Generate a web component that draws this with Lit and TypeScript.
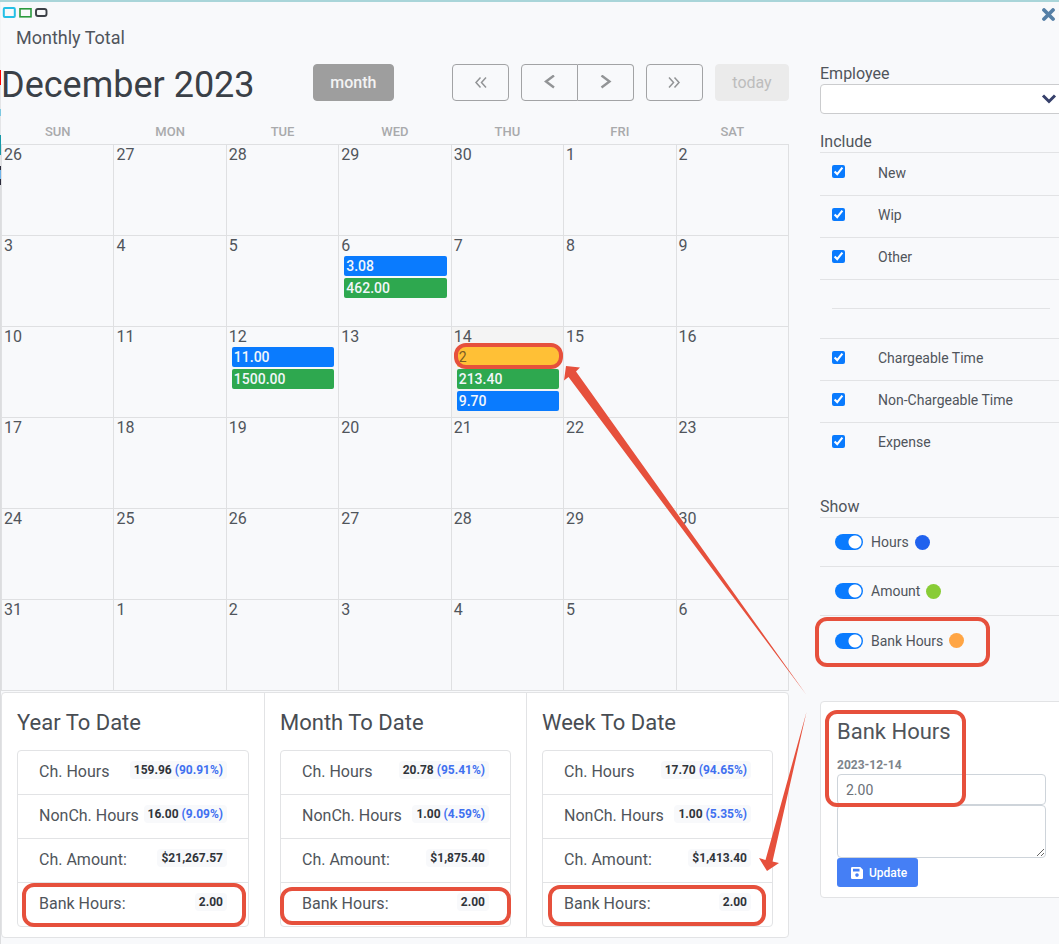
import { LitElement, html, svg, css } from "lit";
import { customElement } from "lit/decorators.js";
import { classMap } from "lit/directives/class-map.js";

type CalendarEvent = { text: string; kind: "hours" | "amount" | "bank"; marked?: boolean };
type Day = { label: string; today?: boolean; events?: CalendarEvent[] };

const WEEKDAYS = ["SUN", "MON", "TUE", "WED", "THU", "FRI", "SAT"];

const EVENTS: Record<number, CalendarEvent[]> = {
  6: [
    { text: "3.08", kind: "hours" },
    { text: "462.00", kind: "amount" },
  ],
  12: [
    { text: "11.00", kind: "hours" },
    { text: "1500.00", kind: "amount" },
  ],
  14: [
    { text: "2", kind: "bank", marked: true },
    { text: "213.40", kind: "amount" },
    { text: "9.70", kind: "hours" },
  ],
};

/* Six weeks, starting on Sunday 26 November 2023. */
const WEEKS: Day[][] = Array.from({ length: 6 }, (_, week) =>
  Array.from({ length: 7 }, (_, weekday) => {
    const offset = week * 7 + weekday - 4;
    if (offset <= 0) return { label: String(30 + offset) };
    if (offset > 31) return { label: String(offset - 31) };
    return { label: String(offset), today: offset === 14, events: EVENTS[offset] };
  })
);

const TOTALS = [
  {
    id: "year",
    title: "Year To Date",
    rows: [
      ["Ch. Hours", "159.96", "(90.91%)"],
      ["NonCh. Hours", "16.00", "(9.09%)"],
      ["Ch. Amount:", "$21,267.57", ""],
      ["Bank Hours:", "2.00", ""],
    ],
  },
  {
    id: "month",
    title: "Month To Date",
    rows: [
      ["Ch. Hours", "20.78", "(95.41%)"],
      ["NonCh. Hours", "1.00", "(4.59%)"],
      ["Ch. Amount:", "$1,875.40", ""],
      ["Bank Hours:", "2.00", ""],
    ],
  },
  {
    id: "week",
    title: "Week To Date",
    rows: [
      ["Ch. Hours", "17.70", "(94.65%)"],
      ["NonCh. Hours", "1.00", "(5.35%)"],
      ["Ch. Amount:", "$1,413.40", ""],
      ["Bank Hours:", "2.00", ""],
    ],
  },
];

const STATUS = ["New", "Wip", "Other"];
const KINDS = ["Chargeable Time", "Non-Chargeable Time", "Expense"];
const SHOW = [
  { label: "Hours", dot: "blue" },
  { label: "Amount", dot: "green" },
  { label: "Bank Hours", dot: "orange", marked: true },
];

const CHEVRONS = {
  first: svg`<path d="M7.500 2.500 3 7.500l4.500 5M13 2.500 8.500 7.500l4.500 5" stroke-width="1.500"/>`,
  last: svg`<path d="M2 2.500 6.500 7.500l-4.500 5M7.500 2.500 12 7.500l-4.500 5" stroke-width="1.500"/>`,
  prev: svg`<path d="M12 .500 4 6.500l8 6" stroke-width="2.400"/>`,
  next: svg`<path d="M3.500 .500l8 6-8 6" stroke-width="2.400"/>`,
};

@customElement("app-root")
export class AppRoot extends LitElement {
  static styles = css`
    :host {
      display: block;
      font-family: Roboto, "Liberation Sans", sans-serif;
      font-size: 16px;
      line-height: 20px;
      color: #50555b;
    }
    *, *::before, *::after { box-sizing: border-box; }
    h1, h2, p, ul { margin: 0; padding: 0; font-weight: 400; }
    button, input, textarea, select { font-family: inherit; margin: 0; }

    .page {
      position: relative;
      min-height: 100vh;
      overflow: hidden;
      padding-left: 1px;
      background: #f8f9fb;
      border-top: 2px solid #a9d5d9;
    }
    .edge {
      position: absolute;
      left: 0;
      top: 0;
      bottom: 0;
      width: 1px;
      background: linear-gradient(
        #f3f4f5 0 68px, #f00 68px 83px, #e4e5e7 83px 107px, #7cc8e0 107px 114px,
        #e4e5e7 114px 133px, #1799a8 133px 153px, #e4e5e7 153px 164px, #2b2b3a 164px 168px,
        #6fb4ea 168px 177px, #2b2b3a 177px 183px, #dcdddf 183px 100%
      );
    }
    .topbar { display: flex; align-items: flex-start; padding: 5px 3px 0 1px; height: 22px; }
    .marks { display: flex; gap: 3px; flex: 1; }
    .marks svg { display: block; }
    .close { border: 0; padding: 0; background: none; height: 15px; }
    .close svg { display: block; }
    .caption { padding: 5px 15px 0; font-size: 18px; line-height: 18px; }

    .layout { display: grid; grid-template-columns: minmax(0, 1fr) 239px; gap: 31px; }

    .toolbar {
      display: flex;
      justify-content: space-between;
      align-items: center;
      height: 38px;
      margin: 16px 0 19px;
    }
    .toolbar h1 { padding-top: 6px; font-size: 36px; line-height: 38px; color: #3a4047; }
    .nav { display: flex; gap: 12px; }
    .group { display: flex; }
    .btn {
      display: flex;
      align-items: center;
      justify-content: center;
      width: 57px;
      height: 37px;
      padding: 0;
      border: 1px solid #a2a3a5;
      border-radius: 4px;
      background: transparent;
      color: #929496;
      font-size: 16px;
    }
    .btn svg { fill: none; stroke: currentColor; }
    .group .btn:first-child { border-radius: 4px 0 0 4px; }
    .group .btn:last-child { border-radius: 0 4px 4px 0; border-left: 0; width: 56px; }
    .month { width: 81px; background: #9e9e9e; color: #f3f3f3; font-weight: 500; border-color: #9e9e9e; }
    .today-btn { width: 74px; background: #ebebeb; border-color: #ebebeb; color: #bdbdbd; }

    .calendar { width: 100%; border-collapse: collapse; table-layout: fixed; }
    .calendar th {
      height: 24px;
      padding: 0;
      font-size: 13px;
      line-height: 22px;
      font-weight: 500;
      color: #a9aaac;
    }
    .calendar td { height: 91px; padding: 0 4px; border: 1px solid #dfe0e2; vertical-align: top; }
    .calendar .today { background: #f4f4f4; }
    .date { display: block; margin-left: -2px; }
    .event {
      position: relative;
      height: 20px;
      margin: 0 0 2px 1px;
      padding: 0 2px;
      border-radius: 2px;
      font-size: 14px;
      font-weight: 500;
      color: #f2f6fa;
    }
    .event.hours { background: #0a7bfe; }
    .event.amount { background: #2ea84f; }
    .event.bank { background: #ffc036; color: #7c5c24; font-weight: 400; }

    .totals {
      display: grid;
      grid-template-columns: repeat(3, minmax(0, 1fr));
      margin-top: 1px;
      background: #fff;
      border: 1px solid #e2e3e5;
      border-radius: 4px;
    }
    .total { padding: 19px 15px 10px; border-left: 1px solid #e2e3e5; }
    .total:first-child { border-left: 0; }
    .total h2 { font-size: 22px; line-height: 22px; margin-bottom: 16px; color: #484d53; }
    .total ul { list-style: none; border: 1px solid #e2e3e5; border-radius: 4px; }
    .total li {
      position: relative;
      display: flex;
      justify-content: space-between;
      align-items: center;
      height: 44px;
      padding: 0 21px;
      border-top: 1px solid #e2e3e5;
    }
    .total li:first-child { height: 43px; border-top: 0; }
    .label { flex: none; }
    .badge {
      flex: none;
      margin-bottom: 4px;
      padding: 0 4px;
      border-radius: 4px;
      background: #f8f9fb;
      color: #30343a;
      font-size: 12px;
      line-height: 18px;
      font-weight: 700;
    }
    .badge em { font-style: normal; color: #4070f0; }

    .side { padding-top: 17px; }
    .side label, .legend { display: block; }
    .picker { position: relative; display: block; margin-right: -5px; }
    .picker select {
      appearance: none;
      display: block;
      width: 100%;
      height: 30px;
      border: 1px solid #cbccce;
      border-radius: 4px;
      background: #fff;
    }
    .picker svg { position: absolute; right: 7px; top: 9px; pointer-events: none; }
    .legend { line-height: 20px; border-bottom: 1px solid #e2e3e5; }
    .include { margin-top: 18px; }
    .options { width: 100%; border-collapse: collapse; font-size: 14px; }
    .options td { height: 42px; padding: 0 0 2px; border-bottom: 1px solid #e2e3e5; }
    .options .last td { border-bottom: 0; }
    .options .tick { width: 58px; padding: 0 0 4px 12px; line-height: 0; }
    .options input { width: 13px; height: 13px; accent-color: #0a7bfe; }
    .options .gap td { height: 59px; padding: 0 9px 0 12px; }
    .options hr { margin: 0; border: 0; border-top: 1px solid #e2e3e5; }
    .show { margin-top: 33px; }
    .toggle {
      position: relative;
      display: flex;
      align-items: center;
      height: 49px;
      padding-left: 15px;
      border-bottom: 1px solid #e2e3e5;
      font-size: 14px;
    }
    .toggle:last-child { border-bottom: 0; }
    .toggle label { display: flex; align-items: center; }
    .toggle input {
      appearance: none;
      width: 28px;
      height: 16px;
      margin-right: 8px;
      border-radius: 8px;
      background: radial-gradient(circle at 20px 8px, #fff 6px, transparent 7px) #0a7bfe;
    }
    .dot { width: 15px; height: 15px; margin-left: 6px; border-radius: 50%; }
    .dot.blue { background: #2062ee; }
    .dot.green { background: #88cc36; }
    .dot.orange { background: #ffa544; }

    .bank-card {
      position: relative;
      margin: 36px -5px 0 0;
      padding: 19px 17px 10px 16px;
      background: #fff;
      border: 1px solid #e2e3e5;
      border-radius: 4px;
    }
    .bank-card h2 { font-size: 22px; line-height: 22px; margin-bottom: 13px; }
    .bank-card label { font-size: 12px; line-height: 18px; font-weight: 700; color: #7d848b; }
    .bank-card input, .bank-card textarea {
      display: block;
      width: 100%;
      border: 1px solid #ced4da;
      border-radius: 4px;
      background: #fff;
      font-size: 14px;
      color: #6b7178;
    }
    .bank-card input { height: 31px; padding: 0 8px; }
    .bank-card textarea { height: 53px; padding: 4px 8px; resize: vertical; }
    .update {
      display: flex;
      align-items: center;
      gap: 6px;
      height: 29px;
      padding: 0 11px 0 14px;
      border: 0;
      border-radius: 3px;
      background: #457ff5;
      color: #fff;
      font-size: 12px;
      font-weight: 500;
    }

    /* Hand-placed highlights that lie over the parts they point out. */
    .callout {
      position: absolute;
      border: 4px solid #e6503c;
      border-radius: 12px;
      pointer-events: none;
    }
    .callout.event-mark { inset: -4px -4px -2px -3px; }
    .callout.year { inset: 0 2px -1px 4px; }
    .callout.month-mark { inset: 4px -1px 1px -1px; }
    .callout.week { inset: 2px 6px 0 5px; }
    .callout.toggle-mark { inset: 1px 69px -2px -5px; }
    .callout.form-mark { left: 4px; top: 8px; width: 141px; height: 97px; }
    .arrows { position: absolute; right: 252px; top: 362px; pointer-events: none; }
  `;

  private renderEvent(event: CalendarEvent) {
    return html`<div class="event ${event.kind}">
      ${event.text}${event.marked ? html`<span class="callout event-mark"></span>` : ""}
    </div>`;
  }

  private renderCalendar() {
    return html`<table class="calendar">
      <thead>
        <tr>${WEEKDAYS.map((name) => html`<th scope="col">${name}</th>`)}</tr>
      </thead>
      <tbody>
        ${WEEKS.map(
          (week) => html`<tr>
            ${week.map(
              (day) => html`<td class=${classMap({ today: !!day.today })}>
                <span class="date">${day.label}</span>
                ${(day.events ?? []).map((event) => this.renderEvent(event))}
              </td>`
            )}
          </tr>`
        )}
      </tbody>
    </table>`;
  }

  private renderTotals() {
    const marks: Record<string, string> = { year: "year", month: "month-mark", week: "week" };
    return html`<div class="totals">
      ${TOTALS.map(
        (total) => html`<section class="total">
          <h2>${total.title}</h2>
          <ul>
            ${total.rows.map(
              ([label, value, share], index) => html`<li>
                <span class="label">${label}</span>
                <span class="badge">${value}${share ? html` <em>${share}</em>` : ""}</span>
                ${index === 3 ? html`<span class="callout ${marks[total.id]}"></span>` : ""}
              </li>`
            )}
          </ul>
        </section>`
      )}
    </div>`;
  }

  private renderOption(label: string, last = false) {
    const id = label.toLowerCase().replace(/\s/g, "-");
    return html`<tr class=${classMap({ last })}>
      <td class="tick"><input type="checkbox" id=${id} checked /></td>
      <td><label for=${id}>${label}</label></td>
    </tr>`;
  }

  private renderSide() {
    return html`<aside class="side">
      <label for="employee">Employee</label>
      <span class="picker">
        <select id="employee"><option></option></select>
        <svg width="16" height="12" viewBox="0 0 16 12">
          <path d="M2 2.500 8 8.500l6-6" fill="none" stroke="#36406b" stroke-width="3" />
        </svg>
      </span>
      <span class="legend include">Include</span>
      <table class="options">
        <tbody>
          ${STATUS.map((label) => this.renderOption(label))}
          <tr class="gap"><td colspan="2"><hr /></td></tr>
          ${KINDS.map((label, i) => this.renderOption(label, i === 2))}
        </tbody>
      </table>
      <span class="legend show">Show</span>
      <div>
        ${SHOW.map(
          (item) => html`<div class="toggle">
            <label><input type="checkbox" role="switch" checked />${item.label}</label>
            <span class="dot ${item.dot}"></span>
            ${item.marked ? html`<span class="callout toggle-mark"></span>` : ""}
          </div>`
        )}
      </div>
      <form class="bank-card">
        <h2>Bank Hours</h2>
        <label for="bank">2023-12-14</label>
        <input id="bank" type="text" value="2.00" />
        <textarea aria-label="Note"></textarea>
        <button class="update" type="button">
          <svg width="12" height="12" viewBox="0 0 12 12">
            <path
              fill="#fff"
              fill-rule="evenodd"
              d="M1.300 0h8L12 2.700v8q0 1.300-1.300 1.300H1.300Q0 12 0 10.700V1.300Q0 0 1.300 0ZM2 1.800v2.700h6.500V1.800ZM6 6.300a1.800 1.800 0 1 0 0 3.600a1.800 1.800 0 1 0 0-3.600Z"
            />
          </svg>
          Update
        </button>
        <span class="callout form-mark"></span>
      </form>
    </aside>`;
  }

  private renderNav(name: keyof typeof CHEVRONS, label: string) {
    return html`<button class="btn" type="button" aria-label=${label}>
      <svg width="15" height="14" viewBox="0 0 15 14">${CHEVRONS[name]}</svg>
    </button>`;
  }

  render() {
    return html`<div class="page">
      <div class="edge"></div>
      <header class="topbar">
        <div class="marks">
          <svg width="46" height="12" viewBox="0 0 46 12" fill="none" stroke-width="1.600">
            <rect x="1.800" y="1" width="11" height="9" rx="1" stroke="#25bfe6" stroke-width="2" />
            <rect x="18" y="1.800" width="11" height="8" stroke="#2b9a3e" />
            <rect x="34" y="2" width="10.500" height="7" rx="2" stroke="#3c4046" stroke-width="1.900" />
          </svg>
        </div>
        <button class="close" type="button" aria-label="Close">
          <svg width="15" height="14" viewBox="0 0 15 14">
            <path d="M3 2l9 9M12 2l-9 9" stroke="#557fa6" stroke-width="3.800" stroke-linecap="round" />
          </svg>
        </button>
      </header>
      <p class="caption">Monthly Total</p>
      <div class="layout">
        <main>
          <div class="toolbar">
            <h1>December 2023</h1>
            <button class="btn month" type="button">month</button>
            <div class="nav">
              ${this.renderNav("first", "Previous year")}
              <div class="group">
                ${this.renderNav("prev", "Previous month")}${this.renderNav("next", "Next month")}
              </div>
              ${this.renderNav("last", "Next year")}
              <button class="btn today-btn" type="button" disabled>today</button>
            </div>
          </div>
          ${this.renderCalendar()} ${this.renderTotals()}
        </main>
        ${this.renderSide()}
      </div>
      <svg class="arrows" width="247" height="512" viewBox="560 364 247 512" fill="#e6503c">
        <path d="M806.500 695 576 371.500 580 367.500 566 366 564 380.500 568.500 377Z" />
        <path d="M806.500 712 772.500 861.500 779 863 767 871 759 858 765.500 860Z" />
      </svg>
    </div>`;
  }
}
